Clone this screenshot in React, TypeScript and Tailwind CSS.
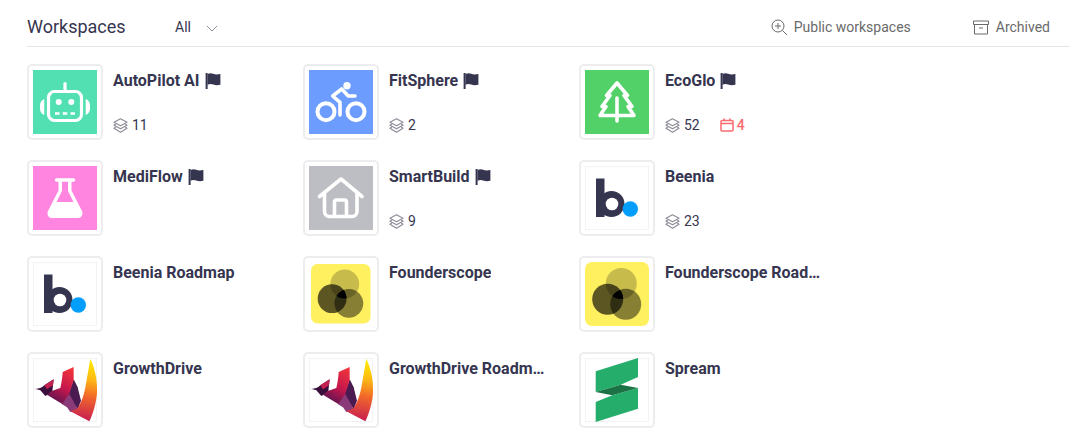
import React from "react";

const navy = "#363550";

function Flag() {
  return (
    <svg width="16" height="16" viewBox="0 0 16 16" className="ml-[5px] shrink-0">
      <path d="M.6 0h2v16h-2z" fill={navy} />
      <path d="M2.500 1c2.400-1 4-.8 5.700-.2 1.900.7 4 .8 7.200.2v10.800c-3 .7-5.200.5-7.200-.2-1.800-.6-3.300-.8-5.700.1z" fill={navy} />
    </svg>
  );
}

function Layers() {
  return (
    <svg width="15" height="15" viewBox="0 0 15 15" fill="none" stroke="#8d8d9b" strokeWidth="1.200" strokeLinejoin="round" strokeLinecap="round" className="shrink-0">
      <path d="M7.500.8 14 4.300 7.500 7.800 1 4.300z" />
      <path d="M2.400 6.300 1 7.300l6.500 3.500L14 7.300l-1.400-1" />
      <path d="M2.400 9.300 1 10.300l6.500 3.900L14 10.300l-1.400-1" />
    </svg>
  );
}

function Robot() {
  return (
    <svg viewBox="0 0 64 64" className="block w-full h-full">
      <rect width="64" height="64" fill="#52e0b2" />
      <g fill="none" stroke="#fff" strokeWidth="3.200">
        <rect x="15.500" y="21.500" width="33" height="29" rx="6" />
        <path d="M32 13.500v8" strokeLinecap="round" />
      </g>
      <path d="M11.300 29v16C8.500 44 7 41.500 7 38.500v-3c0-3 1.500-5.500 4.300-6.500zM52.700 29v16c2.800-1 4.300-3.500 4.300-6.500v-3c0-3-1.500-5.500-4.300-6.500z" fill="#fff" />
      <circle cx="25.700" cy="32" r="3" fill="#fff" />
      <circle cx="38.300" cy="32" r="3" fill="#fff" />
      <path d="M22 43.500h4.500M29.800 43.500h4.500M37.500 43.500h4.500" stroke="#fff" strokeWidth="2.500" />
    </svg>
  );
}

function Bike() {
  return (
    <svg viewBox="0 0 64 64" className="block w-full h-full">
      <rect width="64" height="64" fill="#6d9cff" />
      <g fill="none" stroke="#fff" strokeLinecap="round" strokeLinejoin="round">
        <circle cx="17" cy="41.700" r="8.500" strokeWidth="4" />
        <circle cx="47" cy="41.700" r="8.500" strokeWidth="4" />
        <path d="M31 45V32.300L23.700 26l9-7 6.600 7H46" strokeWidth="3.600" />
      </g>
      <circle cx="38" cy="15.700" r="3.700" fill="#fff" />
    </svg>
  );
}

function Tree() {
  return (
    <svg viewBox="0 0 64 64" className="block w-full h-full">
      <rect width="64" height="64" fill="#52d168" />
      <g fill="none" stroke="#fff" strokeWidth="3.600" strokeLinecap="round" strokeLinejoin="round">
        <path d="M32 13 21.500 25.500H25L17 36.500h4L15 45.500h34L43 36.500h4L39 25.500h3.500z" />
        <path d="M32 28v23" />
      </g>
    </svg>
  );
}

function Flask() {
  return (
    <svg viewBox="0 0 64 64" className="block w-full h-full">
      <rect width="64" height="64" fill="#ff85e0" />
      <path d="M23.500 14h17" stroke="#fff" strokeWidth="3.500" strokeLinecap="round" />
      <path fillRule="evenodd" d="M25.500 15h13v9.500L49 45c1.500 3.500-.5 7-4 7H19c-3.500 0-5.500-3.500-4-7l10.500-20.500zM29 15v10l-5.500 11h17L35 25V15z" fill="#fff" />
    </svg>
  );
}

function House() {
  return (
    <svg viewBox="0 0 64 64" className="block w-full h-full">
      <rect width="64" height="64" fill="#bdbdc4" />
      <g fill="none" stroke="#fff" strokeWidth="3.600" strokeLinecap="round" strokeLinejoin="round">
        <path d="M10.500 30.500 32 13l21 17.500" />
        <path d="M15.500 28v17.500a5 5 0 0 0 5 5h22.500a5 5 0 0 0 5-5V28" />
        <path d="M25.500 50V36a2 2 0 0 1 2-2h8a2 2 0 0 1 2 2v14" />
      </g>
    </svg>
  );
}

function Beenia() {
  return (
    <svg viewBox="0 0 64 64" className="block w-full h-full">
      <rect x="0.500" y="0.500" width="63" height="63" fill="#fff" stroke="#f3f3f5" />
      <path d="M11 12.500h8.500V51H11z" fill={navy} />
      <circle cx="26.500" cy="38" r="13" fill={navy} />
      <circle cx="27" cy="38" r="6.300" fill="#fff" />
      <circle cx="45.300" cy="43" r="7.700" fill="#039dfb" />
    </svg>
  );
}

function FounderArt() {
  const clipId = React.useId();
  const clipId2 = React.useId();
  return (
    <>
      <rect width="64" height="64" rx="7" fill="#fff060" />
      <defs>
        <clipPath id={clipId}>
          <circle cx="36.300" cy="21.500" r="15.500" />
        </clipPath>
        <clipPath id={clipId2}>
          <circle cx="22.700" cy="37.300" r="15.500" />
        </clipPath>
      </defs>
      <circle cx="36.300" cy="21.500" r="15.500" fill="#000" fillOpacity="0.220" />
      <circle cx="22.700" cy="37.300" r="15.500" fill="#000" fillOpacity="0.640" />
      <circle cx="40.700" cy="42.300" r="15.500" fill="#000" fillOpacity="0.470" />
      <g clipPath={`url(#${clipId})`}>
        <g clipPath={`url(#${clipId2})`}>
          <circle cx="40.700" cy="42.300" r="15.500" fill="#000" />
        </g>
      </g>
    </>
  );
}

function Founder() {
  return (
    <svg viewBox="0 0 64 64" className="block w-full h-full">
      <FounderArt />
    </svg>
  );
}

function FounderSmall() {
  return (
    <svg viewBox="0 0 64 64" className="block w-full h-full">
      <g transform="translate(2 2) scale(0.93)">
        <FounderArt />
      </g>
    </svg>
  );
}

function Growth() {
  const a = React.useId();
  const b = React.useId();
  return (
    <svg viewBox="0 0 64 64" className="block w-full h-full overflow-visible">
      <defs>
        <linearGradient id={a} gradientUnits="userSpaceOnUse" x1="192" y1="30" x2="165" y2="200">
          <stop offset="0" stopColor="#ffe600" />
          <stop offset="0.300" stopColor="#fdb813" />
          <stop offset="0.600" stopColor="#f2682a" />
          <stop offset="1" stopColor="#c9234f" />
        </linearGradient>
        <linearGradient id={b} gradientUnits="userSpaceOnUse" x1="130" y1="50" x2="75" y2="145">
          <stop offset="0" stopColor="#f0343c" />
          <stop offset="0.550" stopColor="#c5174d" />
          <stop offset="1" stopColor="#5e1450" />
        </linearGradient>
      </defs>
      <rect x="0.500" y="0.500" width="63" height="63" fill="#fff" stroke="#f3f3f5" />
      <g transform="scale(0.3333) translate(-18 -18)">
        <path d="M18 110c12 2 24 0 34-10l28-18-4 36-14 10-7 4-15-17c-7-3-15-4-22-5z" fill="#3a0f3c" />
        <path d="M52 100l28-18-2 18-18 12z" fill="#c4204f" />
        <path d="M124 128l16-46 12 24 10 40-10 26-24-36z" fill="#4a1a50" />
        <path d="M104 156l22-32 26 48-22 8-10-14z" fill="#8a3a78" />
        <path d="M60 128l16-12 24-8c4-16 6-32 7-48l33-15v40l-14 42-20 29-14-8z" fill={`url(#${b})`} />
        <path d="M190 20c15 30 22 70 20 105-3 30-12 60-23 83l-57-30 20-8c15-20 22-45 27-75 4-25 9-50 13-75z" fill={`url(#${a})`} />
      </g>
    </svg>
  );
}

function Spream() {
  return (
    <svg viewBox="0 0 64 64" className="block w-full h-full">
      <rect x="0.500" y="0.500" width="63" height="63" fill="#fff" stroke="#f3f3f5" />
      <path d="M10.700 13.300 53 0v19L35.700 26.700 10.700 34z" fill="#25ae6b" />
      <path d="M53 30v20.700L10.700 64V44l16.600-6.700z" fill="#25ae6b" />
      <path d="M10.700 34 35.700 26.700 53 30 27.300 37.300z" fill="#1a7245" />
    </svg>
  );
}

type Item = { name: string; Logo: () => React.ReactElement; flag?: boolean; layers?: number; due?: number };

const items: Item[] = [
  { name: "AutoPilot AI", Logo: Robot, flag: true, layers: 11 },
  { name: "FitSphere", Logo: Bike, flag: true, layers: 2 },
  { name: "EcoGlo", Logo: Tree, flag: true, layers: 52, due: 4 },
  { name: "MediFlow", Logo: Flask, flag: true },
  { name: "SmartBuild", Logo: House, flag: true, layers: 9 },
  { name: "Beenia", Logo: Beenia, layers: 23 },
  { name: "Beenia Roadmap", Logo: Beenia },
  { name: "Founderscope", Logo: FounderSmall },
  { name: "Founderscope Roadmap", Logo: Founder },
  { name: "GrowthDrive", Logo: Growth },
  { name: "GrowthDrive Roadmap", Logo: Growth },
  { name: "Spream", Logo: Spream },
];

export default function App() {
  return (
    <div className="w-[1090px] h-[442px] overflow-hidden bg-white pl-[27px] pr-5 font-['Roboto',sans-serif]">
      <header className="h-[47px] pt-[15px] border-b border-[#e6e6e8] flex items-start">
        <h1 className="w-[148px] text-[18px] leading-6 text-[#363550]">Workspaces</h1>
        <div className="flex items-center h-6 text-[14px] text-[#363550]">
          All
          <svg width="12" height="7" viewBox="0 0 12 7" fill="none" stroke="#8d8d9b" strokeWidth="1" className="ml-[15px] mt-[2px]">
            <path d="M.8.8 6 6l5.200-5.200" />
          </svg>
        </div>
        <div className="ml-auto pr-5 flex items-center h-6 text-[14px] text-[#6a6a6a]">
          <svg width="17" height="17" viewBox="0 0 17 17" fill="none" stroke="#6a6a6a" strokeWidth="1" className="mr-[6px]">
            <circle cx="7" cy="7" r="6" />
            <path d="M11.500 11.500 16 16M7 4v6M4 7h6" />
          </svg>
          Public workspaces
          <svg width="16" height="15" viewBox="0 0 16 15" fill="none" stroke="#6a6a6a" strokeWidth="1" className="ml-[62px] mr-[7px]">
            <path d="M.5 1h15v3.500H.5zM1.500 4.500V14h13V4.500M6 8h4" />
          </svg>
          Archived
        </div>
      </header>
      <div className="grid grid-cols-[276px_276px_276px] auto-rows-[96px] pt-[17px]">
        {items.map((it) => (
          <div key={it.name} className="flex">
            <div className="w-[76px] h-[76px] shrink-0 border-2 border-[#ededf0] rounded-[5px] p-1 bg-white">
              <it.Logo />
            </div>
            <div className="ml-[10px] w-[160px] h-[76px] flex flex-col justify-between pt-[7px] pb-[5px]">
              <div className="flex items-center h-5">
                <span className="max-w-[156px] overflow-hidden whitespace-nowrap text-ellipsis text-[16px] font-bold leading-5 text-[#363550]">{it.name}</span>
                {it.flag && <Flag />}
              </div>
              {it.layers !== undefined && (
                <div className="flex items-center h-5 text-[14px] text-[#363550]">
                  <Layers />
                  <span className="ml-[4px]">{it.layers}</span>
                  {it.due !== undefined && (
                    <span className="ml-[20px] flex items-center font-medium text-[#fb6b6f]">
                      <svg width="14" height="14" viewBox="0 0 14 14" fill="none" stroke="#fb6b6f" strokeWidth="1.500" className="mr-[3px]">
                        <rect x="1" y="2.500" width="12" height="10.500" rx="1" />
                        <path d="M1 5.500h12M4 .5V3M10 .5V3" />
                      </svg>
                      {it.due}
                    </span>
                  )}
                </div>
              )}
            </div>
          </div>
        ))}
      </div>
    </div>
  );
}
